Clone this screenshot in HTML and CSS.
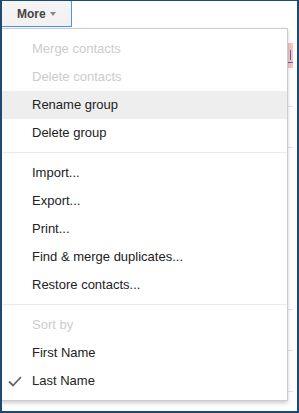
FILE: index.html
```html
<!DOCTYPE html>
<html>
<head>
<meta charset="utf-8">
<link rel="stylesheet" href="styles.css">
</head>
<body>
<div class="frame">
  <div class="toolbar">
    <div class="more">More <span class="caret"></span></div>
  </div>
  <div class="list">
    <div class="row r-top"></div>
    <div class="row r-pink"><span class="flag"><i class="bar-v"></i><i class="bar-h"></i></span></div>
    <div class="row r-a line"></div>
    <div class="row r-b line"></div>
    <div class="row r-c line"></div>
    <div class="row r-b line"></div>
    <div class="row r-b line"></div>
  </div>
  <div class="menu">
    <div class="item disabled">Merge contacts</div>
    <div class="item disabled">Delete contacts</div>
    <div class="item hover">Rename group</div>
    <div class="item">Delete group</div>
    <div class="sep"></div>
    <div class="item">Import...</div>
    <div class="item">Export...</div>
    <div class="item">Print...</div>
    <div class="item">Find &amp; merge duplicates...</div>
    <div class="item">Restore contacts...</div>
    <div class="sep"></div>
    <div class="item disabled">Sort by</div>
    <div class="item">First Name</div>
    <div class="item checked"><svg class="check" width="14" height="11" viewBox="0 0 14 11"><polyline points="1,5.5 5,9.5 13,1" fill="none" stroke="#666" stroke-width="1.8"/></svg>Last Name</div>
  </div>
</div>
</body>
</html>
```
FILE: styles.css
```css
html, body {
  margin: 0;
  padding: 0;
  background: #fff;
}
.frame {
  position: relative;
  width: 299px;
  height: 413px;
  box-sizing: border-box;
  border: 2px solid #1d4a72;
  border-top-width: 1px;
  overflow: hidden;
  background: #fff;
  font-family: "Liberation Sans", Arial, sans-serif;
}
.toolbar {
  height: 27px;
  display: flex;
}
.more {
  width: 54px;
  height: 25px;
  padding: 0 0 0 15px;
  gap: 4px;
  background: linear-gradient(#f5f5f5, #f1f1f1);
  border-right: 1px solid #4d90fe;
  border-bottom: 1px solid #4d90fe;
  font-size: 12px;
  font-weight: bold;
  color: #444;
  line-height: 24px;
  display: flex;
  align-items: center;
}
.caret {
  width: 0;
  height: 0;
  border-left: 3.5px solid transparent;
  border-right: 3.5px solid transparent;
  border-top: 4px solid #888;
  margin-top: 1px;
}
.list {
  width: 291px;
  display: flex;
  flex-direction: column;
}
.row {
  box-sizing: border-box;
  display: flex;
  justify-content: flex-end;
}
.r-top { height: 15px; }
.r-pink { height: 25px; }
.r-a { height: 39px; }
.r-b { height: 41px; }
.r-c { height: 162px; }
.line { border-bottom: 1px solid #e5e5e5; }
.r-c.line { border-bottom-color: #e5e5e5; }
.flag {
  position: relative;
  width: 5px;
  height: 25px;
  background: #f6c4bd;
}
.bar-v {
  position: absolute;
  left: 2px;
  top: 7px;
  width: 1px;
  height: 10px;
  background: #4a67c9;
}
.bar-h {
  position: absolute;
  left: 0;
  top: 19px;
  width: 5px;
  height: 1px;
  background: #4a67c9;
}
.menu {
  position: absolute;
  top: 27px;
  left: -1px;
  width: 287px;
  box-sizing: border-box;
  background: #fff;
  border: 1px solid #ccc;
  box-shadow: 0 2px 4px rgba(0, 0, 0, 0.2);
  padding: 6px 0 5px;
}
.item {
  position: relative;
  padding: 6px 0 6px 30px;
  font-size: 13px;
  line-height: 16px;
  color: #222;
  white-space: nowrap;
}
.item.disabled { color: #ccc; }
.item.hover { background: #eee; }
.sep {
  margin: 5px 0 6px;
  border-top: 1px solid #ebebeb;
}
.check {
  position: absolute;
  left: 6px;
  top: 9px;
}
```
